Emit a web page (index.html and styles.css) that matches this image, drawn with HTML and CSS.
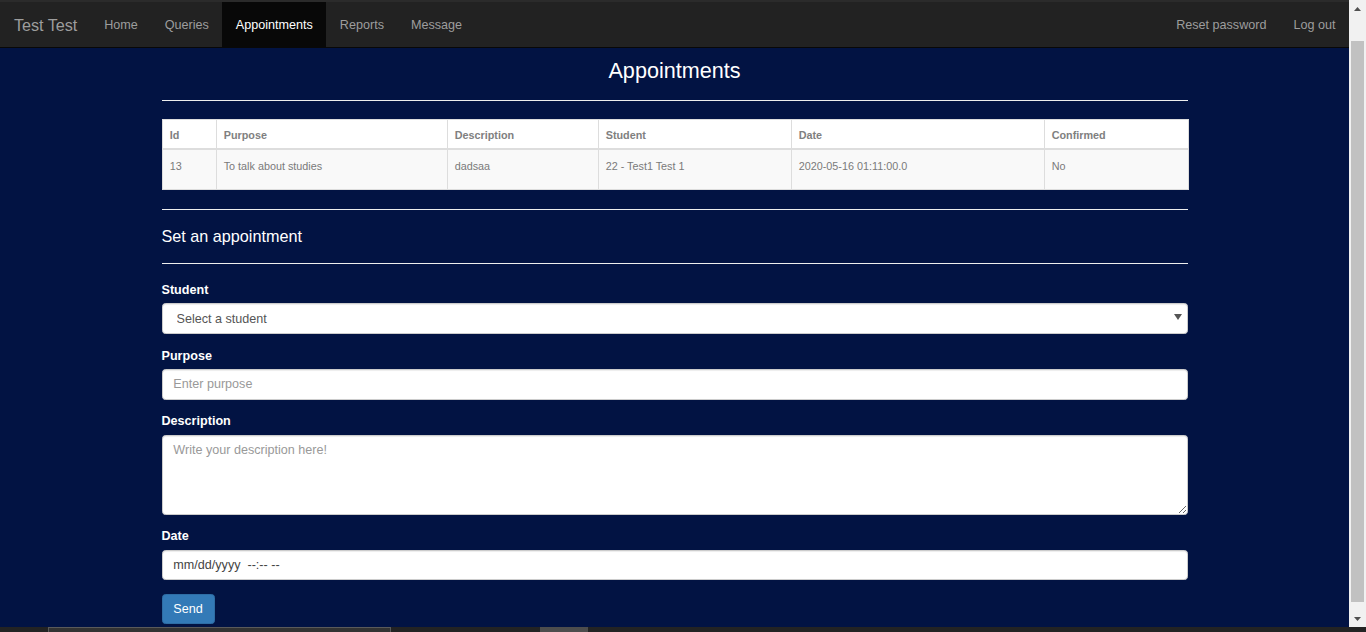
FILE: index.html
```html
<!DOCTYPE html>
<html lang="en">
<head>
<meta charset="utf-8">
<title>Appointments</title>
<link rel="stylesheet" href="styles.css">
</head>
<body>
<div class="screen">
  <div class="viewport">
    <nav class="navbar">
      <div class="nav-left">
        <a class="brand" href="#">Test Test</a>
        <ul class="nav">
          <li><a href="#">Home</a></li>
          <li><a href="#">Queries</a></li>
          <li class="active"><a href="#">Appointments</a></li>
          <li><a href="#">Reports</a></li>
          <li><a href="#">Message</a></li>
        </ul>
      </div>
      <ul class="nav">
        <li><a href="#">Reset password</a></li>
        <li><a href="#">Log out</a></li>
      </ul>
    </nav>

    <main class="container">
      <h3 class="page-title">Appointments</h3>
      <hr class="rule">
      <table class="table">
        <colgroup>
          <col class="c-id"><col class="c-purpose"><col class="c-desc"><col class="c-student"><col class="c-date"><col class="c-conf">
        </colgroup>
        <thead>
          <tr><th>Id</th><th>Purpose</th><th>Description</th><th>Student</th><th>Date</th><th>Confirmed</th></tr>
        </thead>
        <tbody>
          <tr><td>13</td><td>To talk about studies</td><td>dadsaa</td><td>22 - Test1 Test 1</td><td>2020-05-16 01:11:00.0</td><td>No</td></tr>
        </tbody>
      </table>
      <hr class="rule">
      <h4 class="section-title">Set an appointment</h4>
      <hr class="rule">
      <form class="form">
        <div class="group">
          <label class="label" for="student">Student</label>
          <div class="select-wrap">
            <select id="student" class="control select">
              <option>Select a student</option>
            </select>
            <svg class="select-arrow" width="8" height="6" viewBox="0 0 8 6"><path d="M0 0H8L4 6Z" fill="#555"/></svg>
          </div>
        </div>
        <div class="group">
          <label class="label" for="purpose">Purpose</label>
          <input id="purpose" class="control" type="text" placeholder="Enter purpose">
        </div>
        <div class="group">
          <label class="label" for="desc">Description</label>
          <textarea id="desc" class="control textarea" placeholder="Write your description here!"></textarea>
        </div>
        <div class="group">
          <label class="label" for="date">Date</label>
          <input id="date" class="control date" type="text" value="mm/dd/yyyy  --:-- --">
        </div>
        <button type="button" class="btn">Send</button>
      </form>
    </main>
  </div>
  <div class="vscroll">
    <div class="sb-btn"><svg width="7" height="4" viewBox="0 0 7 4"><path d="M0 4H7L3.5 0Z" fill="#505050"/></svg></div>
    <div class="sb-track"><div class="sb-thumb"></div></div>
    <div class="sb-btn"><svg width="7" height="4" viewBox="0 0 7 4"><path d="M0 0H7L3.5 4Z" fill="#505050"/></svg></div>
  </div>
</div>
<div class="taskbar">
  <div class="tb-item tb-wide"></div>
  <div class="tb-item tb-small"></div>
</div>
</body>
</html>
```

FILE: styles.css
```css
html, body {
  margin: 0;
  padding: 0;
  height: 632px;
  overflow: hidden;
}

body {
  font-family: "Liberation Sans", Arial, sans-serif;
  font-size: 12.6px;
  line-height: 1.42857;
  background: #021343;
  color: #fff;
}

.screen {
  display: flex;
  height: 627px;
}

.viewport {
  flex: 1;
  min-width: 0;
  overflow: hidden;
  background: #021343;
}

/* navbar */
.navbar {
  display: flex;
  justify-content: space-between;
  height: 45px;
  background: #222;
  border-top: 2px solid #2b2b2b;
  border-bottom: 1px solid #080808;
}

.nav-left {
  display: flex;
}

.brand {
  display: block;
  padding: 13.5px 13.5px 13.5px 14px;
  font-size: 16.2px;
  line-height: 18px;
  letter-spacing: -0.05px;
  color: #9d9d9d;
  text-decoration: none;
}

.nav {
  display: flex;
  list-style: none;
  margin: 0;
  padding: 0;
}

.nav a {
  display: block;
  padding: 13.5px;
  line-height: 18px;
  color: #9d9d9d;
  text-decoration: none;
}

.nav .active a {
  background: #080808;
  color: #fff;
}

/* main */
.container {
  width: 1026px;
  margin: 0 auto;
  display: flex;
  flex-direction: column;
}

.page-title {
  margin: 11px 0 -0.8px;
  font-size: 21.6px;
  line-height: 1.1;
  font-weight: normal;
  text-align: center;
}

.rule {
  width: 100%;
  height: 0;
  margin: 18px 0 0;
  border: 0;
  border-top: 1px solid #eee;
}

.table {
  width: 100%;
  margin: 18px 0 1px;
  table-layout: fixed;
  border-collapse: collapse;
  border: 1px solid #ddd;
  background: #fff;
  color: #7a7a7a;
  font-size: 10.8px;
}

.c-id { width: 54px; }
.c-purpose { width: 231px; }
.c-desc { width: 151px; }
.c-student { width: 193px; }
.c-date { width: 253px; }
.c-conf { width: 144px; }

.table th {
  text-align: left;
  font-weight: bold;
  line-height: 15px;
  padding: 8.5px 7.2px 5px;
  border: 1px solid #ddd;
  border-bottom-width: 2px;
  color: #808080;
}

.table td {
  line-height: 15px;
  padding: 8.5px 7.2px 15px;
  border: 1px solid #ddd;
  vertical-align: top;
  background: #f9f9f9;
}

.section-title {
  margin: 18.5px 0 -1.3px;
  font-size: 16.2px;
  line-height: 1.1;
  font-weight: normal;
}

/* form */
.form {
  margin-top: 18px;
  display: flex;
  flex-direction: column;
}

.group {
  display: flex;
  flex-direction: column;
  margin-bottom: 13.5px;
}

.label {
  font-weight: bold;
  line-height: 17px;
  margin-bottom: 4.5px;
}

.control {
  box-sizing: border-box;
  width: 100%;
  height: 30.6px;
  margin: 0;
  padding: 5.4px 10.8px;
  font-family: "Liberation Sans", Arial, sans-serif;
  font-size: 12.6px;
  line-height: 18px;
  color: #555;
  background: #fff;
  border: 1px solid #ccc;
  border-radius: 3.6px;
  box-shadow: inset 0 1px 1px rgba(0, 0, 0, 0.075);
  outline: none;
}

.control::placeholder {
  color: #999;
}

.select-wrap {
  position: relative;
}

.select {
  appearance: none;
  -webkit-appearance: none;
  padding-left: 14px;
}

.select-arrow {
  position: absolute;
  right: 6px;
  top: 11px;
}

.textarea {
  height: 80px;
  resize: vertical;
}

.date {
  color: #444;
}

.btn {
  align-self: flex-start;
  height: 30px;
  padding: 5px 10.8px;
  font-family: "Liberation Sans", Arial, sans-serif;
  font-size: 12.6px;
  line-height: 18px;
  color: #fff;
  background: #337ab7;
  border: 1px solid #2e6da4;
  border-radius: 3.6px;
}

/* scrollbar */
.vscroll {
  width: 17px;
  background: #f1f1f1;
  display: flex;
  flex-direction: column;
}

.sb-btn {
  height: 17px;
  display: flex;
  align-items: center;
  justify-content: center;
}

.sb-track {
  flex: 1;
  display: flex;
  flex-direction: column;
  padding: 24px 2px 8px;
}

.sb-thumb {
  flex: 1;
  background: #c1c1c1;
}

/* bottom strip */
.taskbar {
  height: 5px;
  background: #232323;
  display: flex;
  padding-left: 48px;
  gap: 149px;
}

.tb-item {
  box-sizing: border-box;
  height: 5px;
}

.tb-wide {
  width: 343px;
  background: #333;
  border: 1px solid #5a5a5a;
  border-bottom: 0;
}

.tb-small {
  width: 48px;
  background: #4d4d4d;
}
```
